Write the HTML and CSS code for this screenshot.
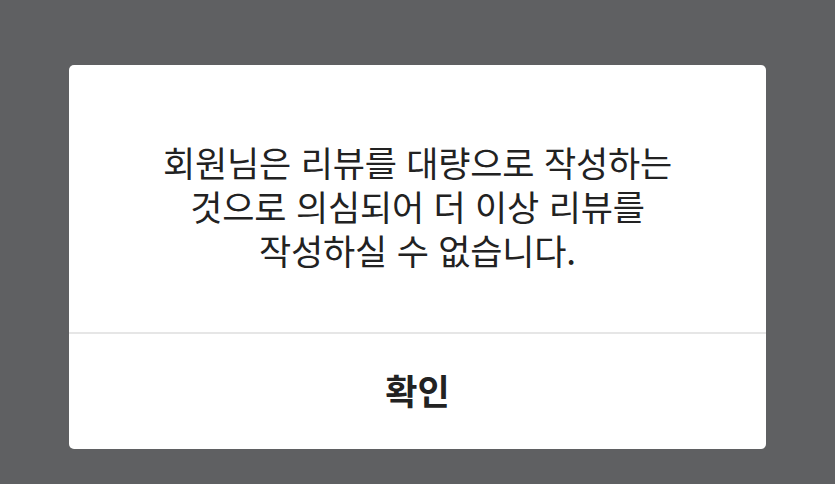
FILE: index.html
```html
<!DOCTYPE html>
<html lang="ko">
<head>
<meta charset="utf-8">
<link rel="stylesheet" href="styles.css">
</head>
<body>
<div class="dialog">
  <div class="message">
    <p class="text">회원님은 리뷰를 대량으로 작성하는<br>것으로 의심되어 더 이상 리뷰를<br>작성하실 수 없습니다.</p>
  </div>
  <div class="divider"></div>
  <div class="actions">
    <span class="confirm">확인</span>
  </div>
</div>
</body>
</html>
```
FILE: styles.css
```css
html, body {
  margin: 0;
  padding: 0;
  height: 100%;
  background: #5f6062;
  font-family: "Noto Sans CJK KR", "Noto Sans", sans-serif;
}
body {
  padding: 65px 0 0 69px;
  box-sizing: border-box;
}
.dialog {
  width: 697px;
  height: 384px;
  background: #ffffff;
  border-radius: 5px;
  display: flex;
  flex-direction: column;
}
.message {
  height: 267px;
  display: flex;
  align-items: center;
  justify-content: center;
  padding-top: 14px;
  box-sizing: border-box;
}
.text {
  margin: 0;
  text-align: center;
  font-size: 35px;
  line-height: 44px;
  letter-spacing: -0.2px;
  color: #222222;
}
.divider {
  height: 2px;
  background: #e6e6e6;
}
.actions {
  flex: 1;
  display: flex;
  align-items: center;
  justify-content: center;
  padding-bottom: 4px;
}
.confirm {
  font-size: 35px;
  line-height: 44px;
  font-weight: 700;
  color: #222222;
}
```
